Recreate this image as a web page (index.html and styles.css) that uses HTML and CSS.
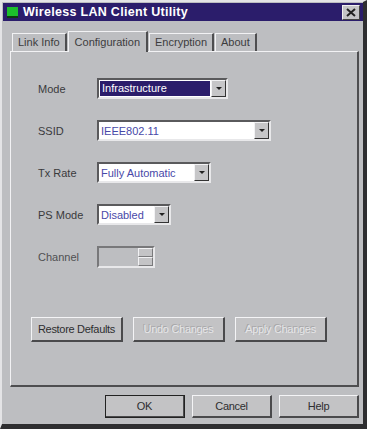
FILE: index.html
```html
<!DOCTYPE html>
<html lang="en">
<head>
    <meta charset="UTF-8">
    <title>Wireless LAN Client Utility</title>
    <link rel="stylesheet" href="styles.css">
</head>
<body>
    <div class="window">
        <div class="title-bar">
            <span class="app-icon"></span>
            <span class="title">Wireless LAN Client Utility</span>
            <span class="close-btn">
                <svg width="10" height="9" viewBox="0 0 10 9"><path d="M1 1 L9 8 M9 1 L1 8" stroke="#222" stroke-width="2"/></svg>
            </span>
        </div>

        <div class="tabs">
            <div class="tab">Link Info</div>
            <div class="tab active">Configuration</div>
            <div class="tab">Encryption</div>
            <div class="tab">About</div>
        </div>

        <div class="panel">
            <div class="row">
                <span class="label">Mode</span>
                <div class="combo combo-mode selected">
                    <span class="value">Infrastructure</span>
                    <span class="arrow"></span>
                </div>
            </div>
            <div class="row">
                <span class="label">SSID</span>
                <div class="combo combo-ssid">
                    <span class="value">IEEE802.11</span>
                    <span class="arrow"></span>
                </div>
            </div>
            <div class="row">
                <span class="label">Tx Rate</span>
                <div class="combo combo-rate">
                    <span class="value">Fully Automatic</span>
                    <span class="arrow"></span>
                </div>
            </div>
            <div class="row">
                <span class="label">PS Mode</span>
                <div class="combo combo-ps">
                    <span class="value">Disabled</span>
                    <span class="arrow"></span>
                </div>
            </div>
            <div class="row">
                <span class="label dim">Channel</span>
                <div class="spin">
                    <span class="spin-field"></span>
                    <span class="spin-btns"><span></span><span></span></span>
                </div>
            </div>

            <div class="actions">
                <button class="btn">Restore Defaults</button>
                <button class="btn disabled">Undo Changes</button>
                <button class="btn disabled">Apply Changes</button>
            </div>
        </div>

        <div class="footer">
            <button class="btn btn-wide default">OK</button>
            <button class="btn btn-wide">Cancel</button>
            <button class="btn btn-wide">Help</button>
        </div>
    </div>
</body>
</html>
```

FILE: styles.css
```css
body {
    margin: 0;
    font-family: "Liberation Sans", Arial, sans-serif;
    font-size: 11px;
    color: #333;
    background: #bdbec1;
}

.window {
    width: 367px;
    height: 429px;
    box-sizing: border-box;
    background: #bdbec1;
    border-right: 4px solid #2e2e30;
    border-bottom: 5px solid #2e2e30;
    border-top: 2px solid #e4e4e6;
    border-left: 2px solid #e4e4e6;
    display: flex;
    flex-direction: column;
}

.title-bar {
    margin: 1px 0 0 1px;
    height: 18px;
    background: #2b1d6b;
    display: flex;
    align-items: center;
    padding: 0 3px 0 4px;
}

.app-icon {
    width: 11px;
    height: 9px;
    background: #1cbf2c;
    border-bottom: 2px solid #0d3a10;
    margin-right: 5px;
}

.title {
    color: #fff;
    font-weight: bold;
    font-size: 12.5px;
    letter-spacing: 0.3px;
    flex: 1;
}

.close-btn {
    width: 16px;
    height: 13px;
    background: #c4c4c6;
    border: 1px solid #f0f0f0;
    border-right-color: #444;
    border-bottom-color: #444;
    display: flex;
    align-items: center;
    justify-content: center;
}

.tabs {
    display: flex;
    align-items: flex-end;
    margin: 9px 0 0 10px;
    height: 21px;
}

.tab {
    height: 17px;
    line-height: 17px;
    padding: 0 5px;
    border: 1px solid #f2f2f4;
    border-bottom: none;
    border-right: 2px solid #4e4e50;
    color: #3c3c3e;
    font-size: 11px;
    margin-right: 1px;
}

.tab.active {
    height: 20px;
    line-height: 20px;
    padding: 0 6px;
    margin-bottom: -1px;
    background: #bdbec1;
    position: relative;
    z-index: 1;
}

.panel {
    margin: 0 4px 0 8px;
    height: 336px;
    border: 1px solid #f2f2f4;
    border-right: 2px solid #4e4e50;
    border-bottom: 2px solid #4e4e50;
    padding: 26px 0 0 27px;
    box-sizing: border-box;
}

.row {
    display: flex;
    align-items: center;
    height: 21px;
    margin-bottom: 21px;
}

.label {
    width: 59px;
    color: #3a3a3c;
}

.label.dim {
    color: #505052;
}

.combo {
    height: 21px;
    box-sizing: border-box;
    background: #fff;
    border: 2px solid #5a5a5c;
    border-right-color: #e8e8ea;
    border-bottom-color: #e8e8ea;
    display: flex;
    align-items: center;
}

.combo .value {
    flex: 1;
    padding-left: 2px;
    color: #4848a8;
    white-space: nowrap;
    overflow: hidden;
}

.combo.selected .value {
    background: #2b1d6b;
    color: #fff;
    height: 15px;
    line-height: 15px;
    margin: 0 1px;
}

.combo-mode { width: 131px; }
.combo-ssid { width: 174px; }
.combo-rate { width: 114px; }
.combo-ps { width: 74px; }

.arrow {
    width: 15px;
    height: 17px;
    box-sizing: border-box;
    background: #c6c6c8;
    border: 1px solid #f2f2f4;
    border-right-color: #333;
    border-bottom-color: #333;
    display: flex;
    align-items: center;
    justify-content: center;
}

.arrow::after {
    content: "";
    border-left: 3px solid transparent;
    border-right: 3px solid transparent;
    border-top: 3px solid #222;
}

.spin {
    width: 58px;
    height: 22px;
    box-sizing: border-box;
    border: 2px solid #78787a;
    border-right-color: #e8e8ea;
    border-bottom-color: #e8e8ea;
    display: flex;
}

.spin-field {
    flex: 1;
}

.spin-btns {
    width: 15px;
    display: flex;
    flex-direction: column;
}

.spin-btns span {
    flex: 1;
    background: #c4c4c6;
    border: 1px solid #f2f2f4;
    border-right-color: #7a7a7c;
    border-bottom-color: #7a7a7c;
}

.actions {
    display: flex;
    gap: 10px;
    margin: 50px 0 0 -7px;
}

.btn {
    font-family: "Liberation Sans", Arial, sans-serif;
    font-size: 11px;
    width: 92px;
    height: 25px;
    padding: 0;
    background: #c3c3c5;
    color: #2e2e30;
    border: 1px solid #f4f4f6;
    border-right: 2px solid #4a4a4c;
    border-bottom: 2px solid #4a4a4c;
    letter-spacing: -0.3px;
}

.btn.disabled {
    color: #e6e6e8;
    text-shadow: -1px -1px 0 #a6a6a8;
}

.footer {
    display: flex;
    gap: 7px;
    justify-content: flex-end;
    margin: 8px 4px 0 0;
}

.btn-wide {
    width: 80px;
    height: 23px;
}

.btn.default {
    outline: 1px solid #222;
    outline-offset: -1px;
}
```
